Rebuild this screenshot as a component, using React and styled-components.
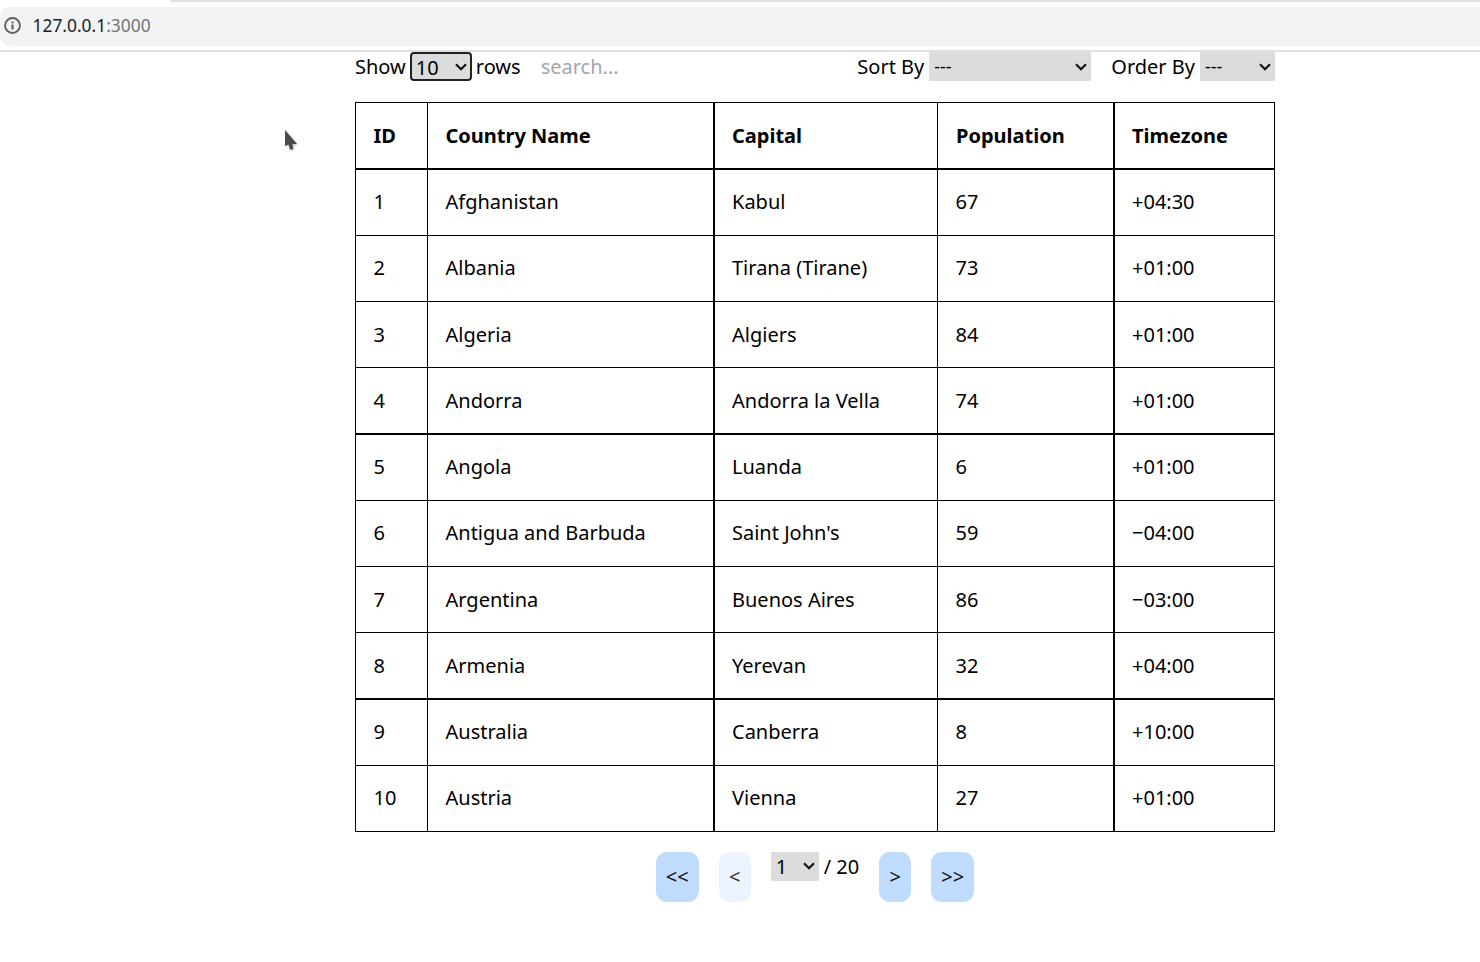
import React from "react";
import styled, { createGlobalStyle } from "styled-components";

const countries = [
  [1, "Afghanistan", "Kabul", 67, "+04:30"],
  [2, "Albania", "Tirana (Tirane)", 73, "+01:00"],
  [3, "Algeria", "Algiers", 84, "+01:00"],
  [4, "Andorra", "Andorra la Vella", 74, "+01:00"],
  [5, "Angola", "Luanda", 6, "+01:00"],
  [6, "Antigua and Barbuda", "Saint John's", 59, "−04:00"],
  [7, "Argentina", "Buenos Aires", 86, "−03:00"],
  [8, "Armenia", "Yerevan", 32, "+04:00"],
  [9, "Australia", "Canberra", 8, "+10:00"],
  [10, "Austria", "Vienna", 27, "+01:00"],
];

const columns = [
  ["ID", 72],
  ["Country Name", 286],
  ["Capital", 224],
  ["Population", 176],
  ["Timezone", 161],
];

const chevron =
  "url(\"data:image/svg+xml,%3Csvg xmlns='http://www.w3.org/2000/svg' width='12' height='8' viewBox='0 0 12 8'%3E%3Cpath d='M1 1.2 L6 6.2 L11 1.2' fill='none' stroke='%23111' stroke-width='2.2'/%3E%3C/svg%3E\")";

const App = () => {
  return (
    <>
      <GlobalStyle />
      <BrowserBar>
        <TabEdge />
        <AddressBar>
          <InfoIcon viewBox="0 0 16 16">
            <circle cx="8" cy="8" r="7" fill="none" stroke="#5f6368" strokeWidth="1.8" />
            <rect x="7" y="7" width="2" height="4.8" fill="#5f6368" />
            <rect x="7" y="4.2" width="2" height="1.8" fill="#5f6368" />
          </InfoIcon>
          <Host>127.0.0.1</Host>
          <Port>:3000</Port>
        </AddressBar>
      </BrowserBar>
      <Cursor viewBox="0 0 14 22">
        <path d="M1 0 L1 16 L4.5 14.5 L6 19.5 L9 19.5 L8.5 14 L13 14 Z" fill="#4a4a4a" />
      </Cursor>
      <Page>
        <Toolbar>
          <Group $gap={4}>
            <span>Show</span>
            <SelectBox $bordered $width={62} defaultValue="10">
              <option>10</option>
              <option>25</option>
              <option>50</option>
            </SelectBox>
            <span>rows</span>
            <Search placeholder="search..." />
          </Group>
          <Group $gap={5}>
            <span>Sort By</span>
            <SelectBox $small $width={162}>
              <option>---</option>
            </SelectBox>
            <OrderLabel>Order By</OrderLabel>
            <SelectBox $small $width={75}>
              <option>---</option>
            </SelectBox>
          </Group>
        </Toolbar>
        <Table>
          <colgroup>
            {columns.map(([name, width]) => (
              <col key={name} width={width} />
            ))}
          </colgroup>
          <thead>
            <tr>
              {columns.map(([name]) => (
                <Th key={name}>{name}</Th>
              ))}
            </tr>
          </thead>
          <tbody>
            {countries.map((row) => (
              <Row key={row[0]} $thick={row[0] === 4 || row[0] === 8}>
                {row.map((value, i) => (
                  <Td key={i}>{value}</Td>
                ))}
              </Row>
            ))}
          </tbody>
        </Table>
        <Pagination>
          <PageButton $width={43}>&lt;&lt;</PageButton>
          <PageButton $width={32} $disabled>&lt;</PageButton>
          <PageInfo>
            <SelectBox $width={48} defaultValue="1">
              <option>1</option>
              <option>2</option>
            </SelectBox>
            <span>/ 20</span>
          </PageInfo>
          <PageButton $width={32}>&gt;</PageButton>
          <PageButton $width={43}>&gt;&gt;</PageButton>
        </Pagination>
      </Page>
    </>
  );
};

export default App;

const GlobalStyle = createGlobalStyle`
  html, body {
    margin: 0;
    background: #fff;
    color: #000;
    font-family: "Noto Sans", sans-serif;
    font-size: 20px;
  }
`;

const BrowserBar = styled.div`
  height: 50px;
  border-bottom: 2px solid #dedfe0;
  display: flex;
  flex-direction: column;
`;

const TabEdge = styled.div`
  height: 2px;
  margin-left: 170px;
  margin-bottom: 5px;
  background: #dee1e6;
  border-bottom-left-radius: 4px;
`;

const AddressBar = styled.div`
  height: 39px;
  background: #f1f3f4;
  border-radius: 10px 0 0 10px;
  display: flex;
  align-items: center;
  padding-left: 4px;
  padding-bottom: 3px;
  box-sizing: border-box;
  font-size: 17.4px;
`;

const InfoIcon = styled.svg`
  width: 17px;
  height: 17px;
  margin-right: 11.5px;
`;

const Host = styled.span`
  color: #202124;
`;

const Port = styled.span`
  color: #70757a;
`;

const Cursor = styled.svg`
  position: absolute;
  left: 284px;
  top: 130px;
  width: 14px;
  height: 22px;
  filter: drop-shadow(1px 1px 1px rgba(0, 0, 0, 0.25));
`;

const Page = styled.main`
  width: 920px;
  margin-left: 355px;
`;

const Toolbar = styled.div`
  display: flex;
  justify-content: space-between;
  height: 29px;
  margin-bottom: 21px;
`;

const Group = styled.div`
  display: flex;
  align-items: center;
  gap: ${(p) => p.$gap}px;
  line-height: 29px;
`;

const SelectBox = styled.select`
  appearance: none;
  width: ${(p) => p.$width}px;
  height: 29px;
  box-sizing: border-box;
  font-family: "Noto Sans", sans-serif;
  font-size: ${(p) => (p.$small ? 18 : 20)}px;
  line-height: 27px;
  color: #000;
  background-color: #dcdcdc;
  background-image: ${chevron};
  background-repeat: no-repeat;
  background-position: right ${(p) => (p.$bordered ? 3 : 4)}px center;
  border: ${(p) => (p.$bordered ? "2px solid #222" : "none")};
  border-radius: ${(p) => (p.$bordered ? "4px" : "0")};
  padding: 0 0 ${(p) => (p.$bordered ? 4 : 0)}px ${(p) => (p.$bordered ? 4 : 5)}px;
`;

const Search = styled.input`
  width: 120px;
  margin-left: 16px;
  border: none;
  outline: none;
  background: transparent;
  padding: 0;
  font-family: "Noto Sans", sans-serif;
  font-size: 20px;

  &::placeholder {
    color: #a3a6ad;
  }
`;

const OrderLabel = styled.span`
  margin-left: 15px;
`;

const Table = styled.table`
  width: 919px;
  table-layout: fixed;
  border-collapse: collapse;
`;

const Th = styled.th`
  height: 66.25px;
  box-sizing: border-box;
  padding: 0 18px 0 17.5px;
  border: 1px solid #000;
  border-bottom-width: 2px;
  text-align: left;
  font-weight: 700;
  font-size: 20px;

  &:nth-child(3),
  &:nth-child(5) {
    border-left-width: 2px;
  }

  &:nth-child(4) {
    padding-left: 18px;
  }
`;

const Td = styled.td`
  height: 66.25px;
  box-sizing: border-box;
  padding: 0 18px 0.5px 17.5px;
  border: 1px solid #000;
  font-size: 20px;

  &:nth-child(3),
  &:nth-child(5) {
    border-left-width: 2px;
  }
`;

const Row = styled.tr`
  ${(p) => p.$thick && "td { border-bottom-width: 2px; }"}
`;

const Pagination = styled.div`
  display: flex;
  justify-content: center;
  align-items: flex-start;
  gap: 20px;
  margin-top: 20px;
`;

const PageButton = styled.button`
  width: ${(p) => p.$width}px;
  height: 50px;
  border: none;
  border-radius: 11px;
  padding: 0;
  color: ${(p) => (p.$disabled ? "#333" : "#111")};
  background: ${(p) => (p.$disabled ? "#eaf3fe" : "#bfdbfe")};
  font-family: "Noto Sans", sans-serif;
  font-size: 20px;
`;

const PageInfo = styled.div`
  display: flex;
  align-items: center;
  gap: 5px;
  height: 29px;
`;
